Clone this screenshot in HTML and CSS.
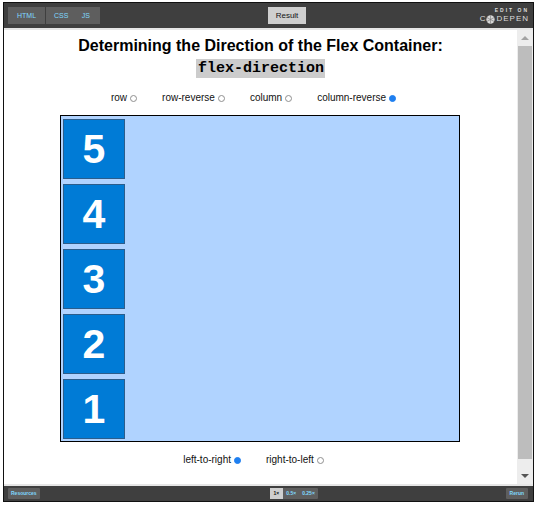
FILE: index.html
```html
<!DOCTYPE html>
<html>
<head>
  <title>flex-direction</title>
  <link rel="stylesheet" href="styles.css">
</head>
<body>
  <div class="frame">
    <div class="topbar">
      <div class="tabs">
        <span class="tab tab-html">HTML</span>
        <span class="tab tab-cssjs"><span>CSS</span><span>JS</span></span>
      </div>
      <span class="result-btn">Result</span>
      <div class="logo">
        <div class="logo-edit">EDIT ON</div>
        <div class="logo-name">C<svg class="logo-mark" viewBox="0 0 10 10"><circle cx="5" cy="5" r="4.6" fill="#d8d8d8"/><path d="M5 .5v9M1 2.8l8 4.4M9 2.8L1 7.2" stroke="#777" stroke-width=".7"/></svg>DEPEN</div>
      </div>
    </div>

    <div class="middle">
      <div class="content">
        <h1>Determining the Direction of the Flex Container:</h1>
        <div class="code-line"><code>flex-direction</code></div>

        <div class="options options-top">
          <span class="opt">row<i class="radio"></i></span>
          <span class="opt">row-reverse<i class="radio"></i></span>
          <span class="opt">column<i class="radio"></i></span>
          <span class="opt">column-reverse<i class="radio on"></i></span>
        </div>

        <div class="stage">
          <div class="item">1</div>
          <div class="item">2</div>
          <div class="item">3</div>
          <div class="item">4</div>
          <div class="item">5</div>
        </div>

        <div class="options options-bottom">
          <span class="opt">left-to-right<i class="radio on"></i></span>
          <span class="opt">right-to-left<i class="radio"></i></span>
        </div>
      </div>

      <div class="scrollbar">
        <div class="arrow-up"></div>
        <div class="thumb"></div>
        <div class="arrow-down"></div>
      </div>
    </div>

    <div class="bottombar">
      <span class="small-btn">Resources</span>
      <div class="zoom-group">
        <span class="zoom-opt active">1×</span>
        <span class="zoom-opt">0.5×</span>
        <span class="zoom-opt">0.25×</span>
      </div>
      <span class="small-btn small-btn-rerun">Rerun</span>
    </div>
  </div>
</body>
</html>
```

FILE: styles.css
```css
body {
  margin: 0;
  background-color: #fff;
  font-family: "Liberation Sans", Arial, sans-serif;
}

.frame {
  width: 529px;
  height: 498px;
  margin: 2px 0 0 3px;
  border: 1px solid #111;
  display: flex;
  flex-direction: column;
}

/* top bar */
.topbar {
  height: 25px;
  flex: none;
  background-color: #3f3f3f;
  border-bottom: 2px solid #e6e6e6;
  display: flex;
  align-items: center;
  padding: 0 5px 0 4px;
}

.tabs {
  display: flex;
  gap: 1px;
}

.tab {
  height: 17px;
  line-height: 17px;
  background-color: #5e5e5e;
  color: #7fd8ff;
  font-size: 7px;
  text-align: center;
  box-sizing: border-box;
}

.tab-html {
  width: 37px;
}

.tab-cssjs {
  width: 54px;
  display: flex;
  justify-content: space-between;
  padding: 0 10px 0 8px;
}

.result-btn {
  width: 38px;
  height: 17px;
  line-height: 17px;
  margin-left: 168px;
  background-color: #cfcfcf;
  color: #111;
  font-size: 8px;
  text-align: center;
}

.logo {
  margin-left: auto;
  color: #ddd;
  text-align: right;
}

.logo-edit {
  font-size: 5px;
  font-weight: bold;
  letter-spacing: 2px;
  line-height: 7px;
  margin-right: -1px;
}

.logo-name {
  font-size: 8px;
  letter-spacing: 1px;
  line-height: 10px;
  display: flex;
  align-items: center;
  margin-right: -1px;
}

.logo-mark {
  width: 9px;
  height: 9px;
  margin-right: 1px;
}

/* middle */
.middle {
  flex: 1;
  display: flex;
  min-height: 0;
}

.content {
  flex: 1;
  min-width: 0;
  background-color: #fff;
}

h1 {
  margin: 6px 0 0;
  font-size: 16px;
  line-height: 20px;
  font-weight: bold;
  text-align: center;
  color: #000;
}

.code-line {
  text-align: center;
  margin-top: 2px;
  height: 19px;
}

code {
  display: inline-block;
  height: 19px;
  line-height: 19px;
  padding: 0 1px 0 2px;
  background-color: #ccc;
  font-family: "Liberation Mono", "Courier New", monospace;
  font-size: 15px;
  font-weight: bold;
  color: #000;
}

.options {
  display: flex;
  justify-content: center;
  font-size: 10px;
  color: #111;
  height: 12px;
  line-height: 12px;
  padding-right: 14px;
}

.options-top {
  gap: 25px;
  margin-top: 15px;
}

.options-bottom {
  gap: 25px;
  margin-top: 12px;
}

.opt {
  display: flex;
  align-items: center;
  gap: 3px;
}

.radio {
  display: block;
  width: 7px;
  height: 7px;
  border: 1px solid #8f8f8f;
  border-radius: 50%;
  box-sizing: border-box;
  background-color: #fff;
}

.radio.on {
  background-color: #1e7ff0;
  border-color: #1e7ff0;
}

.stage {
  width: 396px;
  height: 320px;
  margin: 11px 0 0 56px;
  border: 1px solid #000;
  background-color: #b0d3ff;
  display: flex;
  flex-direction: column-reverse;
  align-items: flex-start;
  gap: 5px;
  padding: 3px 0 2px 2px;
}

.item {
  width: 62px;
  height: 60px;
  flex: none;
  box-sizing: border-box;
  background-color: #007bd6;
  border: 1px solid #2b5d8c;
  color: #fff;
  font-size: 41px;
  font-weight: bold;
  line-height: 58px;
  text-align: center;
}

/* scrollbar */
.scrollbar {
  width: 16px;
  flex: none;
  background-color: #ededed;
  display: flex;
  flex-direction: column;
  align-items: center;
}

.arrow-up {
  width: 0;
  height: 0;
  margin-top: 6px;
  border-left: 4px solid transparent;
  border-right: 4px solid transparent;
  border-bottom: 4px solid #a3a3a3;
}

.thumb {
  width: 14px;
  height: 413px;
  margin-top: 6px;
  background-color: #bdbdbd;
}

.arrow-down {
  width: 0;
  height: 0;
  margin-top: 15px;
  border-left: 4px solid transparent;
  border-right: 4px solid transparent;
  border-top: 4px solid #555;
}

/* bottom bar */
.bottombar {
  height: 15px;
  flex: none;
  background-color: #3f3f3f;
  border-top: 2px solid #e6e6e6;
  display: flex;
  align-items: center;
  padding: 0 5px 0 4px;
}

.small-btn {
  height: 11px;
  line-height: 11px;
  padding: 0 3px;
  background-color: #5e5e5e;
  color: #7fd8ff;
  font-size: 5px;
  font-weight: bold;
  border-radius: 1px;
}

.small-btn-rerun {
  padding: 0 4px;
}

.zoom-group {
  display: flex;
  height: 11px;
  margin-left: 230px;
  margin-right: auto;
  background-color: #5e5e5e;
  border-radius: 1px;
}

.zoom-opt {
  line-height: 11px;
  padding: 0 3px;
  color: #7fd8ff;
  font-size: 5px;
  font-weight: bold;
}

.zoom-opt.active {
  background-color: #cfcfcf;
  color: #111;
  padding: 0 4px;
}
```
